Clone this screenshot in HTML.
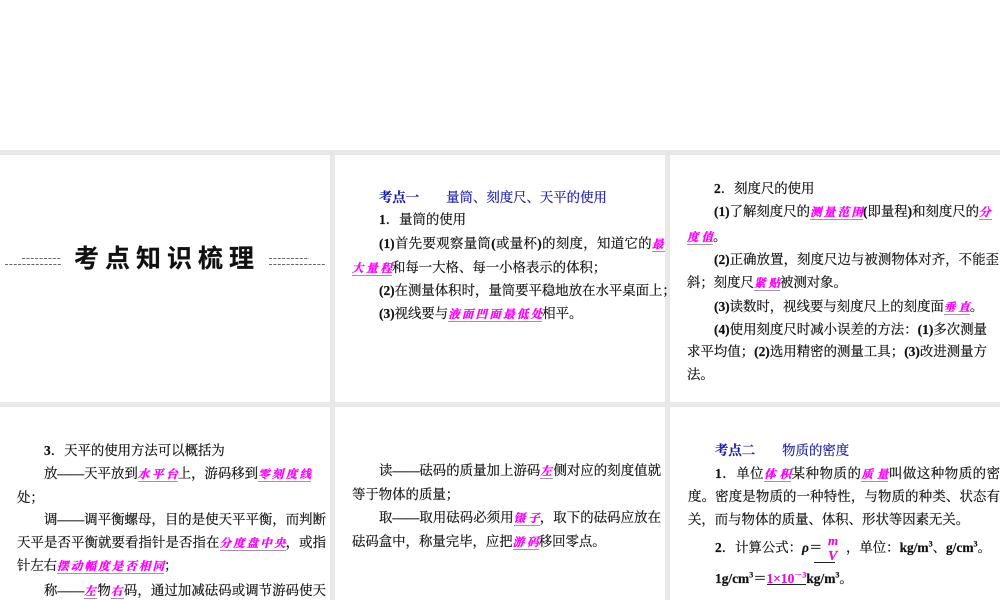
<!DOCTYPE html>
<html lang="zh"><head><meta charset="utf-8"><title>考点知识梳理</title>
<style>
html,body{margin:0;padding:0;background:#fff}
#s{position:relative;width:1000px;height:600px;overflow:hidden;background:#e8e8e8;font-family:"Liberation Serif","Noto Serif CJK SC",serif;font-size:13.4px;color:#111}
.p{position:absolute;background:#fff}
.l{position:absolute;white-space:nowrap;height:20px;line-height:20px;text-align-last:justify;filter:blur(.3px);-webkit-text-stroke:.2px currentColor;margin-top:1px}
.n{text-align-last:left}
b{font-weight:bold}
.k{display:inline-block;height:14px;line-height:13px;background:linear-gradient(#a88fb0,#a88fb0) 0 12px/100% 1px no-repeat;color:#f0f;font-weight:bold;font-style:italic;font-size:11.5px;text-align-last:justify;vertical-align:0;text-align:center;-webkit-text-stroke:.35px #f0f}
.h{color:#1a1aa8}
sup{font-size:8px;line-height:0;font-weight:bold}
</style></head><body><div id="s">
<div class="p" style="left:0;top:0;width:1000px;height:150px"></div>
<div class="p" style="left:0;top:155px;width:330px;height:247px"></div>
<div class="p" style="left:335px;top:155px;width:330px;height:247px"></div>
<div class="p" style="left:670px;top:155px;width:330px;height:247px"></div>
<div class="p" style="left:0;top:407px;width:330px;height:193px"></div>
<div class="p" style="left:335px;top:407px;width:330px;height:193px"></div>
<div class="p" style="left:670px;top:407px;width:330px;height:193px"></div>

<svg style="position:absolute;left:0;top:250px;filter:blur(.3px)" width="330" height="20">
<g stroke="#666" stroke-width="1" stroke-dasharray="3 1.4" fill="none">
<path d="M5 14.5H61M22 8.5H61M269 8.5H309M269 14.5H325"/></g></svg>
<div class="l" style="left:74px;top:243px;width:180px;height:30px;line-height:30px;font-family:'Liberation Sans','Noto Sans CJK SC',sans-serif;font-size:25px;font-weight:bold;color:#111">考点知识梳理</div>

<div class="l n h" style="left:379px;top:187px"><b>考点一</b><span style="display:inline-block;width:27px"></span>量筒、刻度尺、天平的使用</div>
<div class="l n" style="left:379px;top:209px"><b>1</b>．量筒的使用</div>
<div class="l" style="left:379px;top:233px;width:286px"><b>(1)</b>首先要观察量筒<b>(</b>或量杯<b>)</b>的刻度，知道它的<span class="k" style="width:13px">最</span></div>
<div class="l n" style="left:352px;top:257px"><span class="k" style="width:40px">大量程</span>和每一大格、每一小格表示的体积；</div>
<div class="l" style="left:379px;top:280px;width:286px"><b>(2)</b>在测量体积时，量筒要平稳地放在水平桌面上；</div>
<div class="l n" style="left:379px;top:303px"><b>(3)</b>视线要与<span class="k" style="width:94px">液面凹面最低处</span>相平。</div>

<div class="l n" style="left:714px;top:178px"><b>2</b>．刻度尺的使用</div>
<div class="l n" style="left:714px;top:201px"><b>(1)</b>了解刻度尺的<span class="k" style="width:53px">测量范围</span><b>(</b>即量程<b>)</b>和刻度尺的<span class="k" style="width:13px">分</span></div>
<div class="l n" style="left:687px;top:226px"><span class="k" style="width:26px">度值</span>。</div>
<div class="l" style="left:714px;top:249px;width:285px"><b>(2)</b>正确放置，刻度尺边与被测物体对齐，不能歪</div>
<div class="l n" style="left:687px;top:272px">斜；刻度尺<span class="k" style="width:26px">紧贴</span>被测对象。</div>
<div class="l n" style="left:714px;top:296px"><b>(3)</b>读数时，视线要与刻度尺上的刻度面<span class="k" style="width:26px">垂直</span>。</div>
<div class="l" style="left:714px;top:319px;width:273px"><b>(4)</b>使用刻度尺时减小误差的方法：<b>(1)</b>多次测量</div>
<div class="l" style="left:687px;top:341px;width:300px">求平均值；<b>(2)</b>选用精密的测量工具；<b>(3)</b>改进测量方</div>
<div class="l n" style="left:687px;top:364px">法。</div>

<div class="l n" style="left:44px;top:440px"><b>3</b>．天平的使用方法可以概括为</div>
<div class="l n" style="left:44px;top:463px">放——天平放到<span class="k" style="width:40px">水平台</span>上，游码移到<span class="k" style="width:53px">零刻度线</span></div>
<div class="l n" style="left:17px;top:487px">处；</div>
<div class="l" style="left:44px;top:509px;width:282px">调——调平衡螺母，目的是使天平平衡，而判断</div>
<div class="l" style="left:17px;top:532px;width:309px">天平是否平衡就要看指针是否指在<span class="k" style="width:66px">分度盘中央</span>，或指</div>
<div class="l n" style="left:17px;top:555px">针左右<span class="k" style="width:107px">摆动幅度是否相同</span>；</div>
<div class="l" style="left:44px;top:580px;width:282px">称——<span class="k" style="width:13px">左</span>物<span class="k" style="width:13px">右</span>码，通过加减砝码或调节游码使天</div>

<div class="l" style="left:379px;top:460px;width:282px">读——砝码的质量加上游码<span class="k" style="width:13px">左</span>侧对应的刻度值就</div>
<div class="l n" style="left:352px;top:484px">等于物体的质量；</div>
<div class="l" style="left:379px;top:507px;width:282px">取——取用砝码必须用<span class="k" style="width:26px">镊子</span>，取下的砝码应放在</div>
<div class="l n" style="left:352px;top:531px">砝码盒中，称量完毕，应把<span class="k" style="width:26px">游码</span>移回零点。</div>

<div class="l n h" style="left:715px;top:440px"><b>考点二</b><span style="display:inline-block;width:27px"></span>物质的密度</div>
<div class="l" style="left:715px;top:463px;width:285px"><b>1</b>．单位<span class="k" style="width:27px">体积</span>某种物质的<span class="k" style="width:27px">质量</span>叫做这种物质的密</div>
<div class="l" style="left:688px;top:486px;width:312px">度。密度是物质的一种特性，与物质的种类、状态有</div>
<div class="l n" style="left:688px;top:509px">关，而与物体的质量、体积、形状等因素无关。</div>
<div class="l n" style="left:715px;top:537px"><b>2</b>．计算公式：<b><i>ρ</i></b>＝</div>
<div class="l n" style="left:828px;top:530px;color:#e014d8;font:italic bold 13px/20px 'Liberation Serif',serif">m</div>
<div class="l n" style="left:828px;top:546px;color:#e014d8;font:italic bold 14px/20px 'Liberation Serif',serif">V</div>
<div style="position:absolute;left:814px;top:562px;width:21px;height:1px;background:#222"></div>
<div class="l n" style="left:846px;top:537px">，单位：<b>kg/m<sup>3</sup></b>、<b>g/cm<sup>3</sup></b>。</div>
<div class="l n" style="left:715px;top:568px"><b>1g/cm<sup>3</sup></b>＝<span style="display:inline-block;height:14px;line-height:13px;background:linear-gradient(#222,#222) 0 12px/100% 1px no-repeat;color:#e014d8;font-weight:bold;vertical-align:0">1×10<sup>－3</sup></span><b>kg/m<sup>3</sup></b>。</div>
</div></body></html>
